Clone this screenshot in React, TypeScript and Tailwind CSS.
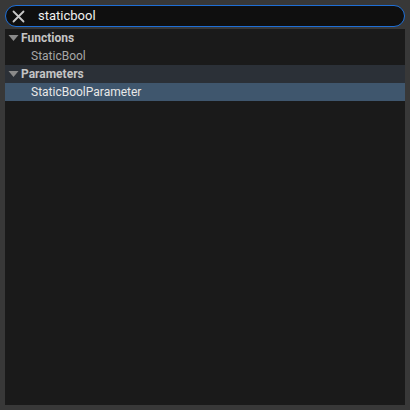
import { useState } from 'react';

type Group = { name: string; items: string[]; highlighted?: boolean };

const groups: Group[] = [
  { name: 'Functions', items: ['StaticBool'] },
  { name: 'Parameters', items: ['StaticBoolParameter'], highlighted: true },
];

export default function App() {
  const [query, setQuery] = useState('staticbool');
  const [selected, setSelected] = useState('StaticBoolParameter');

  return (
    <div className="flex h-[410px] w-[410px] flex-col gap-[2px] bg-[#383838] p-[5px] font-['Roboto','Liberation_Sans',sans-serif]">
      {/* Search box */}
      <div className="flex h-[22px] items-center rounded-full border border-[#1f6fd6] bg-[#0f0f0f] pl-[5px]">
        <button onClick={() => setQuery('')} className="flex h-[14px] w-[14px] items-center justify-center text-[#c8c8c8]">
          <svg width="13" height="13" viewBox="0 0 13 13" fill="none" stroke="currentColor" strokeWidth="1.8" strokeLinecap="round">
            <path d="M1.5 1.5 L11.5 11.5 M11.5 1.5 L1.5 11.5" />
          </svg>
        </button>
        <input
          value={query}
          onChange={(e) => setQuery(e.target.value)}
          className="ml-[13px] flex-1 bg-transparent text-[13px] text-[#f0f0f0] outline-none"
        />
      </div>

      {/* Results */}
      <div className="flex-1 bg-[#1a1a1a]">
        {groups.map((g) => (
          <div key={g.name}>
            <div className={`flex h-[18px] items-center ${g.highlighted ? 'bg-[#2b3037]' : ''}`}>
              <svg className="ml-[3px]" width="11" height="8" viewBox="0 0 11 8" fill="#8a8a8a">
                <path d="M0.5 1 L10.5 1 L5.5 7 Z" />
              </svg>
              <span className="ml-[2px] text-[12px] font-bold text-[#c4c4c4]">{g.name}</span>
            </div>
            {g.items.map((it) => (
              <div
                key={it}
                onClick={() => setSelected(it)}
                className={`flex h-[18px] items-center pl-[26px] text-[12px] ${
                  selected === it ? 'bg-[#3f566d] text-[#e8e8e8]' : 'text-[#a6a6a6]'
                }`}
              >
                {it}
              </div>
            ))}
          </div>
        ))}
      </div>
    </div>
  );
}
